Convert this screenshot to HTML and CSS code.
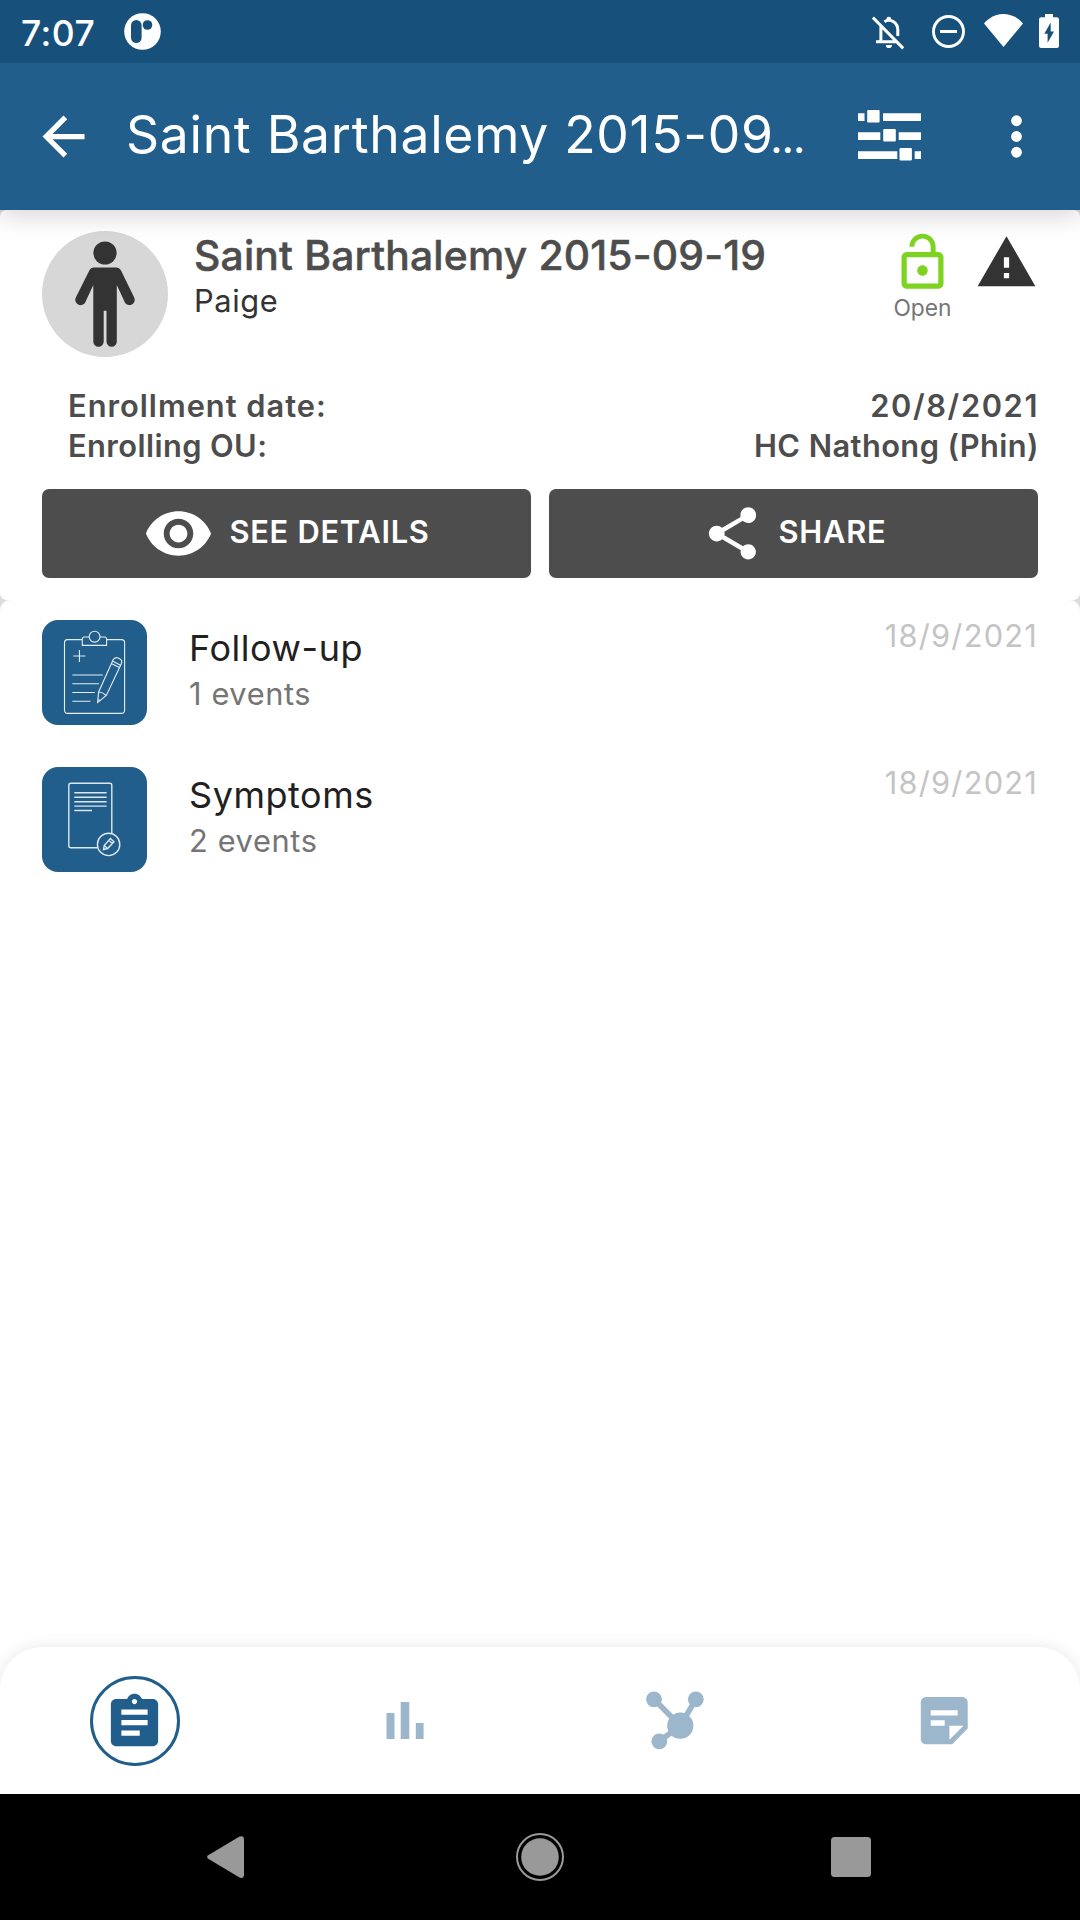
FILE: index.html
```html
<!DOCTYPE html>
<html lang="en">
<head>
<meta charset="utf-8">
<title>Saint Barthalemy 2015-09-19</title>
<link rel="stylesheet" href="styles.css">
</head>
<body>
<div class="screen">
  <div class="status-bar">
    <span class="clock">7:07</span>
    <svg class="app-logo" width="37" height="37" viewBox="0 0 37 37"><circle cx="18.5" cy="18.5" r="18.3" fill="#fff"/><rect x="7" y="7" width="10.6" height="23" rx="5.3" fill="#17517b"/><circle cx="23.5" cy="12" r="4.8" fill="#17517b"/></svg>
    <svg class="bell" width="32" height="34" viewBox="0 0 32 34" fill="none" stroke="#fff" stroke-width="3"><path d="M.9 1.5 31.2 32.4M8.9 9.7V25.6M4 25.7H24.5M12.4 5.7C19 1.8 25.8 7 25.8 14V20"/><path d="M14.4 4.5V3.2a2.4 2.4 0 0 1 4.8 0v1.3zM13.8 29h6.2a3.1 3.1 0 0 1-6.2 0z" fill="#fff" stroke="none"/></svg>
    <svg class="dnd" width="33" height="34" viewBox="0 0 33 34"><circle cx="16.5" cy="16.5" r="15" fill="none" stroke="#fff" stroke-width="2.9"/><path d="M8 15h17v3H8z" fill="#fff"/></svg>
    <svg class="wifi" width="39" height="34" viewBox="0 0 39 34"><path d="M0 9.5C11-3.2 28-3.2 39 9.5L19.5 33z" fill="#fff"/></svg>
    <svg class="battery" width="20" height="34" viewBox="0 0 20 34"><path fill="#fff" fill-rule="evenodd" d="M6 0h8v3.2h3.8A2.2 2.2 0 0 1 20 5.4v26.4a2.2 2.2 0 0 1-2.2 2.2H2.2A2.2 2.2 0 0 1 0 31.8V5.4a2.2 2.2 0 0 1 2.2-2.2H6zM11.7 8.5 5.3 19.8h3.3v9L15 17.4h-3.3z"/></svg>
  </div>

  <header class="app-bar">
    <svg class="back" width="63" height="63" viewBox="0 0 24 24"><path fill="#fff" d="M20 11H7.83l5.59-5.59L12 4l-8 8 8 8 1.41-1.41L7.83 13H20v-2z"/></svg>
    <h1 class="title">Saint Barthalemy 2015-09<span class="more-text">…</span></h1>
    <svg class="tune" width="63" height="51" viewBox="0 0 63 51"><path fill="#fff" d="M0 3.3h6.5V11H0zM25 3.3h38V11H25zM0 22.3h22.3V30H0zM40.7 22.3H63V30H40.7zM0 41.3h39.3V49H0zM56.7 41.3H63V49h-6.3z"/><g fill="#fff"><rect x="9.2" width="12.4" height="12.4" rx="1"/><rect x="25.2" y="19" width="12.6" height="12.6" rx="1"/><rect x="41.5" y="38" width="12.4" height="12.4" rx="1"/></g></svg>
    <svg class="more" width="63" height="63" viewBox="0 0 24 24"><g fill="#fff"><circle cx="12" cy="6" r="2.05"/><circle cx="12" cy="12" r="2.05"/><circle cx="12" cy="18" r="2.05"/></g></svg>
  </header>

  <main class="content">
    <section class="summary">
      <div class="person">
        <div class="avatar"><svg width="126" height="126" viewBox="0 0 126 126"><g fill="#333"><circle cx="63" cy="22" r="11.6"/><path d="M52 36.4H74Q77.4 36.4 79 39.5L92.2 66.5A5.2 5.2 0 0 1 82.8 71.2L74.8 54V110.5A5.1 5.1 0 0 1 64.5 110.5V79.8H61.7V110.5A5.2 5.2 0 0 1 51.3 110.5V54L43.3 71.2A5.2 5.2 0 0 1 33.8 66.5L47.3 39.5Q48.8 36.4 52 36.4Z"/></g></svg></div>
        <div class="who">
          <h2 class="name">Saint Barthalemy 2015-09-19</h2>
          <p class="alias">Paige</p>
        </div>
        <div class="enroll-state">
          <svg width="63" height="63" viewBox="0 0 24 24"><path fill="#7ed321" d="M12 17c1.1 0 2-.9 2-2s-.9-2-2-2-2 .9-2 2 .9 2 2 2zm6-9h-1V6c0-2.76-2.24-5-5-5S7 3.24 7 6h1.9c0-1.71 1.39-3.1 3.1-3.1 1.71 0 3.1 1.39 3.1 3.1v2H6c-1.1 0-2 .9-2 2v10c0 1.1.9 2 2 2h12c1.1 0 2-.9 2-2V10c0-1.1-.9-2-2-2zm0 12H6V10h12v10z"/></svg>
          <span class="state-label">Open</span>
        </div>
        <svg class="warning" width="63" height="63" viewBox="0 0 24 24"><path fill="#333" d="M1 21h22L12 2 1 21zm12-3h-2v-2h2v2zm0-4h-2v-4h2v4z"/></svg>
      </div>
      <dl class="facts">
        <div class="fact"><dt class="wide">Enrollment date:</dt><dd class="digits">20/8/2021</dd></div>
        <div class="fact"><dt>Enrolling OU:</dt><dd>HC Nathong (Phin)</dd></div>
      </dl>
      <div class="actions">
        <button class="action"><svg width="71" height="71" viewBox="0 0 24 24"><path fill="#fff" d="M12 4.5C7 4.5 2.73 7.61 1 12c1.73 4.39 6 7.5 11 7.5s9.27-3.11 11-7.5c-1.73-4.39-6-7.5-11-7.5zM12 17c-2.76 0-5-2.24-5-5s2.24-5 5-5 5 2.24 5 5-2.24 5-5 5zm0-8c-1.66 0-3 1.34-3 3s1.34 3 3 3 3-1.34 3-3-1.34-3-3-3z"/></svg><span>SEE DETAILS</span></button>
        <button class="action"><svg width="63" height="63" viewBox="0 0 24 24"><path fill="#fff" d="M18 16.08c-.76 0-1.44.3-1.96.77L8.91 12.7c.05-.23.09-.46.09-.7s-.04-.47-.09-.7l7.05-4.11c.54.5 1.25.81 2.04.81 1.66 0 3-1.34 3-3s-1.34-3-3-3-3 1.34-3 3c0 .24.04.47.09.7L8.04 9.81C7.5 9.31 6.79 9 6 9c-1.66 0-3 1.34-3 3s1.34 3 3 3c.79 0 1.5-.31 2.04-.81l7.12 4.16c-.05.21-.08.43-.08.65 0 1.61 1.31 2.92 2.92 2.92 1.61 0 2.92-1.31 2.92-2.92s-1.31-2.92-2.92-2.92z"/></svg><span>SHARE</span></button>
      </div>
    </section>

    <section class="stages">
      <article class="stage">
        <div class="stage-icon"><svg width="105" height="105" viewBox="0 0 105 105" fill="none" stroke="#e4edf3" stroke-width="1.1"><path d="M40.3 19.6H25.5a3 3 0 0 0-3 3V90.4a3 3 0 0 0 3 3H79.6a3 3 0 0 0 3-3V22.6a3 3 0 0 0-3-3H64.6"/><path d="M47.4 17H42.3a2 2 0 0 0-2 2v6.4H64.6V19a2 2 0 0 0-2-2H58"/><circle cx="52.6" cy="16.7" r="5.4"/><path d="M37.4 30v12M31.3 36h12.2M30.3 55H60.8M30.3 63.7H57M30.3 72.5H52.8M30.3 81.3H48.5"/><path d="M55.6 82.6 56.6 72 71 40Q73 36.5 76.3 38.1L78 39Q80.8 40.6 79.2 44L64.3 75.5ZM56.6 72Q60.5 72 64.3 75.5M69.3 43.5 77.3 47.6M70.4 41.1 78.5 45.2M55.7 79.4 58.3 80.4"/></svg></div>
        <div class="stage-text"><h3>Follow-up</h3><p>1 events</p></div>
        <time>18/9/2021</time>
      </article>
      <article class="stage">
        <div class="stage-icon"><svg width="105" height="105" viewBox="0 0 105 105" fill="none" stroke="#dce7ee" stroke-width="1.4"><path d="M55.5 80.8H28.8a2 2 0 0 1-2-2V18.2a2 2 0 0 1 2-2H67.8a2 2 0 0 1 2 2V66.2M32.3 25.7H64.6M32.3 30.2H64.6M32.3 34.7H64.6M32.3 39.1H64.6M32.3 43.5H50"/><circle cx="66.6" cy="77.4" r="11.2"/><path d="M61.5 82.5 62.2 78.5 68.4 71.6 71.9 74.8 65.7 81.5ZM62.2 78.5 65.7 81.5M66.8 73.3 70.3 76.5"/></svg></div>
        <div class="stage-text"><h3>Symptoms</h3><p>2 events</p></div>
        <time>18/9/2021</time>
      </article>
    </section>
  </main>

  <nav class="tabs">
    <a class="tab"><span class="ring"><svg width="63" height="63" viewBox="0 0 24 24"><path fill="#225e8b" d="M19 3h-4.18C14.4 1.84 13.3 1 12 1c-1.3 0-2.4.84-2.82 2H5c-1.1 0-2 .9-2 2v14c0 1.1.9 2 2 2h14c1.1 0 2-.9 2-2V5c0-1.1-.9-2-2-2zm-7 0c.55 0 1 .45 1 1s-.45 1-1 1-1-.45-1-1 .45-1 1-1zm2 14H7v-2h7v2zm3-4H7v-2h10v2zm0-4H7V7h10v2z"/></svg></span></a>
    <a class="tab"><svg width="63" height="63" viewBox="0 0 63 63"><path fill="#9cb6cc" d="M12.5 24h8v26h-8zM26.7 13h8.6v37h-8.6zM41.8 34h7.8v16h-7.8z"/></svg></a>
    <a class="tab"><svg width="63" height="63" viewBox="0 0 63 63" fill="#9cb6cc"><path d="M10 10.3 36.3 36.7 51.8 10.3M36.3 36.7 15.3 52.3" fill="none" stroke="#9cb6cc" stroke-width="5.6"/><circle cx="10" cy="10.3" r="7.9"/><circle cx="51.8" cy="10.3" r="7.9"/><circle cx="15.3" cy="52.3" r="7.9"/><circle cx="36.3" cy="36.7" r="13.1"/></svg></a>
    <a class="tab"><svg width="63" height="63" viewBox="0.8 0 63 63"><path fill="#9cb6cc" fill-rule="evenodd" d="M12.8 8H49.3a5.2 5.2 0 0 1 5.2 5.2V39.5L39 55.3H12.8a5.2 5.2 0 0 1-5.2-5.2V13.2A5.2 5.2 0 0 1 12.8 8zM17.5 21.2v5.4h27v-5.4zM17.5 31.3v5.4h14v-5.4zM36.2 36.8V50.7L50.3 36.8z"/></svg></a>
  </nav>

  <div class="system-nav">
    <svg width="37" height="42" viewBox="0 0 37 42"><path fill="#999" d="M1.2 19.2 32.5.5Q37 -1 37 3.5V38.5Q37 43 32.5 41.5L1.2 22.8Q-1 21 1.2 19.2Z"/></svg>
    <svg class="home" width="50" height="50" viewBox="0 0 50 50"><circle cx="25" cy="25" r="23" fill="none" stroke="#999" stroke-width="2"/><circle cx="25" cy="25" r="18.8" fill="#999"/></svg>
    <svg width="40" height="40" viewBox="0 0 40 40"><rect width="40" height="40" rx="3.5" fill="#999"/></svg>
  </div>
</div>
</body>
</html>
```
FILE: styles.css
```css
* { box-sizing: border-box; margin: 0; padding: 0; }
body { background: #fff; font-family: Inter, Roboto, "Liberation Sans", sans-serif; }
svg { display: block; flex: none; }

.screen { width: 1080px; height: 1920px; display: flex; flex-direction: column; overflow: hidden; }

/* Android status bar */
.status-bar { position: relative; z-index: 2; height: 63px; background: #17517b; display: flex; align-items: flex-start; padding: 13px 21px 0; color: #fff; }
.clock { width: 103px; margin-top: -1px; font-size: 35.5px; line-height: 43px; font-weight: 500; letter-spacing: .5px; }
.bell { margin: 3px 0 0 auto; }
.dnd { margin: 2px 0 0 28px; }
.wifi { margin: 1px 0 0 19px; }
.battery { margin: 1px 0 0 16px; }

/* App bar */
.app-bar { position: relative; z-index: 1; height: 147px; background: #225e8b; display: flex; align-items: center; padding: 0 32px; box-shadow: 0 6px 24px rgba(0, 0, 0, .16); }
.title { flex: 1; margin-left: 31px; padding-bottom: 5px; color: #fff; font-size: 51.6px; font-weight: 400; letter-spacing: .7px; white-space: nowrap; }
.more-text { margin-left: -3px; font-size: 34px; font-weight: 700; letter-spacing: 0; }
.tune { margin-bottom: 2px; }
.more { margin-left: 64px; }

/* Enrollment summary */
.content { flex: 1; background: linear-gradient(#dcdcdc 400px, #fff 430px); display: flex; flex-direction: column; }
.summary { height: 390px; padding: 21px 42px 0; background: #fff; border-radius: 7px; }
.person { display: flex; height: 126px; }
.avatar { width: 126px; height: 126px; border-radius: 50%; background: #d7d7d7; overflow: hidden; }
.who { flex: 1; margin-left: 26px; }
.name { font-size: 40.8px; line-height: 48px; font-weight: 500; letter-spacing: .18px; color: #4d4d4d; -webkit-text-stroke: .5px #4d4d4d; white-space: nowrap; }
.alias { margin-top: 3px; font-size: 30.8px; line-height: 37px; letter-spacing: .6px; color: #333; }
.enroll-state { width: 63px; text-align: center; }
.state-label { display: block; font-size: 22.8px; line-height: 28px; color: #757575; }
.warning { margin-left: 21px; }
.facts { margin-top: 29px; padding-left: 26px; }
.fact { display: flex; justify-content: space-between; height: 40px; font-size: 30.8px; line-height: 40px; font-weight: 600; letter-spacing: .42px; color: #4d4d4d; }
.fact .wide { letter-spacing: 1px; }
.fact dd { margin-right: -1px; }
.fact .digits { letter-spacing: 1.6px; margin-right: -1px; }
.actions { display: flex; gap: 18px; margin-top: 23px; }
.action { flex: 1; height: 89px; display: flex; align-items: center; justify-content: center; gap: 15px; border: 0; border-radius: 7px; background: #4d4d4d; color: #fff; font: 600 30.8px/37px Inter, Roboto, sans-serif; letter-spacing: .75px; }
.action span { padding-bottom: 4px; }

/* Program stages */
.stages { flex: 1; padding-top: 20px; background: #fff; border-radius: 10px 10px 0 0; }
.stage { height: 147px; display: flex; align-items: flex-start; padding: 0 42px; }
.stage-icon { width: 105px; height: 105px; border-radius: 16px; background: #225e8b; }
.stage-text { flex: 1; margin-left: 42px; padding-top: 7px; }
.stage-text h3 { font-size: 36px; line-height: 43px; font-weight: 400; letter-spacing: .55px; color: #212121; }
.stage-text p { margin-top: 5px; font-size: 30.8px; line-height: 37px; letter-spacing: .6px; color: #757575; }
.stage time { margin-top: -3px; font-size: 30.8px; line-height: 37px; letter-spacing: 1.2px; color: #c4c4c4; }

/* Bottom tabs */
.tabs { height: 147px; display: flex; background: #fff; border-radius: 42px 42px 0 0; box-shadow: 0 0 16px rgba(0, 0, 0, .1); }
.tab { flex: 1; display: flex; align-items: center; justify-content: center; }
.ring { width: 90px; height: 90px; border: 3px solid #225e8b; border-radius: 50%; display: flex; align-items: center; justify-content: center; padding: 4px 1px 0 0; }

/* Android navigation buttons */
.system-nav { height: 126px; background: #000; display: flex; align-items: center; justify-content: space-between; padding: 0 209px 0 207px; }
.home { margin-left: 5px; }
```
